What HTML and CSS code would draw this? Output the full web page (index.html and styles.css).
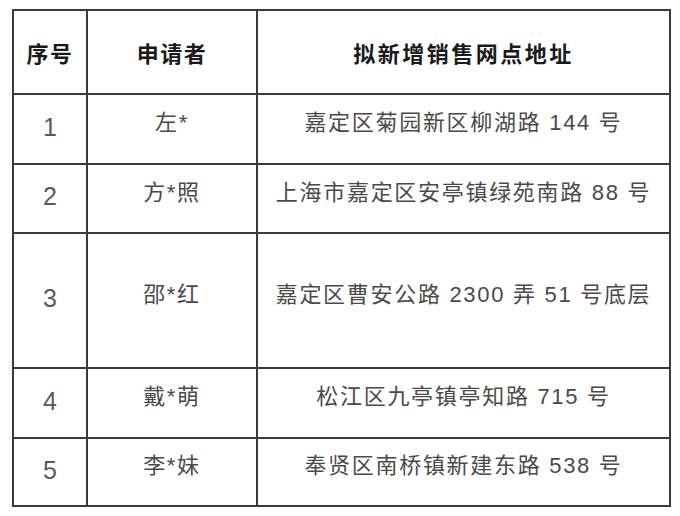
FILE: index.html
```html
<!DOCTYPE html>
<html lang="zh-CN">
<head>
<meta charset="utf-8">
<link rel="stylesheet" href="styles.css">
</head>
<body>
<table class="list">
  <colgroup>
    <col class="c-no">
    <col class="c-name">
    <col class="c-addr">
  </colgroup>
  <thead>
    <tr class="r-head">
      <th>序号</th>
      <th>申请者</th>
      <th class="wide">拟新增销售网点地址</th>
    </tr>
  </thead>
  <tbody>
    <tr class="r1">
      <td class="no">1</td>
      <td class="txt">左*</td>
      <td class="txt">嘉定区菊园新区柳湖路 144 号</td>
    </tr>
    <tr class="r2">
      <td class="no">2</td>
      <td class="txt">方*照</td>
      <td class="txt">上海市嘉定区安亭镇绿苑南路 88 号</td>
    </tr>
    <tr class="r3">
      <td class="no">3</td>
      <td class="txt">邵*红</td>
      <td class="txt">嘉定区曹安公路 2300 弄 51 号底层</td>
    </tr>
    <tr class="r4">
      <td class="no">4</td>
      <td class="txt">戴*萌</td>
      <td class="txt">松江区九亭镇亭知路 715 号</td>
    </tr>
    <tr class="r5">
      <td class="no">5</td>
      <td class="txt">李*妹</td>
      <td class="txt">奉贤区南桥镇新建东路 538 号</td>
    </tr>
  </tbody>
</table>
</body>
</html>
```
FILE: styles.css
```css
html, body {
  margin: 0;
  padding: 0;
  background: #ffffff;
}
body {
  padding: 9px 0 0 12px;
  font-family: "Liberation Sans", "Noto Sans CJK SC", sans-serif;
}
.list {
  border-collapse: collapse;
  table-layout: fixed;
  width: 657px;
}
.c-no { width: 74px; }
.c-name { width: 170px; }
.c-addr { width: 413px; }
.list th,
.list td {
  border: 2px solid #3a3a3a;
  text-align: center;
  vertical-align: middle;
  padding: 0;
  box-sizing: border-box;
}
.list th {
  font-size: 22px;
  font-weight: bold;
  color: #1a1a1a;
  letter-spacing: 1.5px;
}
.list th.wide {
  letter-spacing: 2.5px;
}
.r-head { height: 84px; }
.r1 { height: 70px; }
.r2 { height: 69px; }
.r3 { height: 135px; }
.r4 { height: 70px; }
.r5 { height: 68px; }
.list td.txt {
  font-size: 22px;
  color: #4a4a4a;
  letter-spacing: 1.7px;
  padding-bottom: 18px;
}
.list td.no {
  font-size: 25px;
  color: #5a5a5a;
  padding-bottom: 4px;
}
```
